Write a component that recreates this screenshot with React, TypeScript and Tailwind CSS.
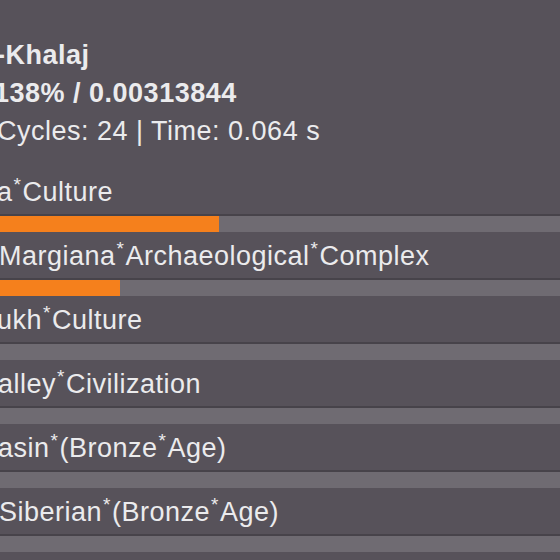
const ROWS = [
  { label: 'a*Culture', shift: 'ml-[-3px]', fill: 219 },
  { label: 'Margiana*Archaeological*Complex', shift: 'ml-[-1px]', fill: 120 },
  { label: 'ukh*Culture', shift: 'ml-[-3px]', fill: 0 },
  { label: 'alley*Civilization', shift: 'ml-[-2px]', fill: 0 },
  { label: 'asin*(Bronze*Age)', shift: 'ml-[-2px]', fill: 0 },
  { label: 'Siberian*(Bronze*Age)', shift: 'ml-[-1px]', fill: 0 },
];

// the source app joins words with a small raised asterisk
function Label({ text }: { text: string }) {
  const parts = text.split('*');
  return (
    <>
      {parts.map((p, i) => (
        <span key={i}>
          {i > 0 && (
            <span className="inline-block text-[19px] align-top leading-none mt-[3px] px-[1px]">*</span>
          )}
          {p}
        </span>
      ))}
    </>
  );
}

export default function App() {
  return (
    <div
      className="w-[560px] h-[560px] overflow-hidden bg-[#57525a] text-[#ebebed] flex flex-col pt-[36px] tracking-[0.5px]"
      style={{ fontFamily: '"Liberation Sans", Arial, sans-serif' }}
    >
      <div className="flex flex-col text-[27px] leading-[38px] whitespace-nowrap">
        <div className="font-bold ml-[-4px]">-Khalaj</div>
        <div className="font-bold ml-[-6px]">138% / 0.00313844</div>
        <div className="ml-[-3px]">Cycles: 24 | Time: 0.064 s</div>
      </div>

      <div className="flex flex-col mt-[18px]">
        {ROWS.map((row) => (
          <div key={row.label} className="flex flex-col">
            <div className="h-[46px] flex items-center pt-[2px] text-[27px] whitespace-nowrap">
              <span className={row.shift}>
                <Label text={row.label} />
              </span>
            </div>
            <div className="h-[2px] bg-[#47434a]" />
            <div className="h-[16px] bg-[#6f6b72] flex">
              {row.fill > 0 && (
                <div className="h-full bg-[#f5801c]" style={{ width: row.fill }} />
              )}
            </div>
          </div>
        ))}
      </div>
    </div>
  );
}
